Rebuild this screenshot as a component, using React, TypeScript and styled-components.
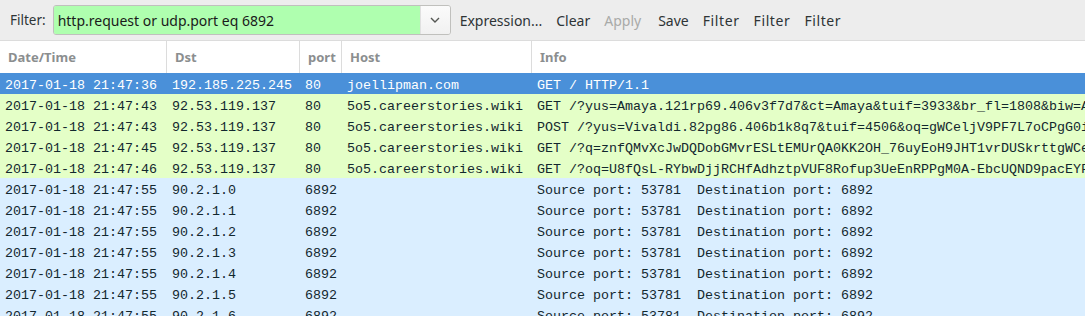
import styled, { createGlobalStyle } from "styled-components";

const GlobalStyle = createGlobalStyle`
  body {
    margin: 0;
    background: #ededed;
    font-family: "Noto Sans", "DejaVu Sans", sans-serif;
    overflow: hidden;
  }
`;

type Kind = "selected" | "http" | "udp";

interface Packet {
  time: string;
  dst: string;
  port: string;
  host: string;
  info: string;
  kind: Kind;
}

const udp = (n: number): Packet => ({
  time: "2017-01-18 21:47:55",
  dst: `90.2.1.${n}`,
  port: "6892",
  host: "",
  info: "Source port: 53781  Destination port: 6892",
  kind: "udp",
});

const packets: Packet[] = [
  {
    time: "2017-01-18 21:47:36",
    dst: "192.185.225.245",
    port: "80",
    host: "joellipman.com",
    info: "GET / HTTP/1.1",
    kind: "selected",
  },
  {
    time: "2017-01-18 21:47:43",
    dst: "92.53.119.137",
    port: "80",
    host: "5o5.careerstories.wiki",
    info: "GET /?yus=Amaya.121rp69.406v3f7d7&ct=Amaya&tuif=3933&br_fl=1808&biw=A",
    kind: "http",
  },
  {
    time: "2017-01-18 21:47:43",
    dst: "92.53.119.137",
    port: "80",
    host: "5o5.careerstories.wiki",
    info: "POST /?yus=Vivaldi.82pg86.406b1k8q7&tuif=4506&oq=gWCeljV9PF7L7oCPgG0i",
    kind: "http",
  },
  {
    time: "2017-01-18 21:47:45",
    dst: "92.53.119.137",
    port: "80",
    host: "5o5.careerstories.wiki",
    info: "GET /?q=znfQMvXcJwDQDobGMvrESLtEMUrQA0KK2OH_76uyEoH9JHT1vrDUSkrttgWCe",
    kind: "http",
  },
  {
    time: "2017-01-18 21:47:46",
    dst: "92.53.119.137",
    port: "80",
    host: "5o5.careerstories.wiki",
    info: "GET /?oq=U8fQsL-RYbwDjjRCHfAdhztpVUF8Rofup3UeEnRPPgM0A-EbcUQND9pacEYF",
    kind: "http",
  },
  udp(0),
  udp(1),
  udp(2),
  udp(3),
  udp(4),
  udp(5),
  udp(6),
];

const rowColors: Record<Kind, { bg: string; fg: string }> = {
  selected: { bg: "#4a90d9", fg: "#ffffff" },
  http: { bg: "#e4ffc7", fg: "#12272e" },
  udp: { bg: "#daeeff", fg: "#12272e" },
};

const columns = "167px 133px 42px 190px 1fr";

const Toolbar = styled.div`
  display: flex;
  align-items: center;
  height: 40px;
  padding-left: 10px;
  background: #ededed;
  border-bottom: 1px solid #dcdcdc;
  font-size: 13.5px;
  color: #2e3436;
`;

const FilterLabel = styled.span`
  margin-right: 7px;
`;

const FilterCombo = styled.div`
  display: flex;
  width: 398px;
  height: 30px;
  box-sizing: border-box;
  border: 1px solid #c0c0bd;
  border-radius: 3px;
  overflow: hidden;
  margin-right: 2px;
`;

const FilterInput = styled.div`
  flex: 1;
  background: #afffaf;
  display: flex;
  align-items: center;
  padding-left: 4px;
  font-size: 14px;
  color: #1a1a1a;
`;

const DropButton = styled.div`
  width: 29px;
  display: flex;
  align-items: center;
  justify-content: center;
  background: linear-gradient(#fbfbfb, #f1f1f1);
  border-left: 1px solid #e0e0e0;
`;

const ToolButton = styled.span<{ $disabled?: boolean; $wide?: boolean }>`
  padding: 0 7px;
  font-size: 14px;
  letter-spacing: ${({ $wide }) => ($wide ? "0.6px" : "0")};
  color: ${({ $disabled }) => ($disabled ? "#a9aaa8" : "#2e3436")};
  &:nth-of-type(5) {
    margin-left: 3px;
  }
`;

const Table = styled.div`
  background: #ffffff;
`;

const HeaderRow = styled.div`
  display: grid;
  grid-template-columns: ${columns};
  height: 32px;
  background: #ffffff;
`;

const HeaderCell = styled.div`
  display: flex;
  align-items: center;
  padding-left: 8px;
  border-right: 1px solid #dcdcdc;
  font-weight: bold;
  font-size: 13px;
  color: #8b8e8f;
  overflow: hidden;
  white-space: nowrap;
  &:last-child {
    border-right: none;
  }
`;

const Row = styled.div<{ $kind: Kind }>`
  display: grid;
  grid-template-columns: ${columns};
  height: 21px;
  box-sizing: border-box;
  padding-top: 3px;
  align-items: center;
  background: ${({ $kind }) => rowColors[$kind].bg};
  color: ${({ $kind }) => rowColors[$kind].fg};
  font-family: "Liberation Mono", "DejaVu Sans Mono", monospace;
  font-size: 13.33px;
`;

const Cell = styled.div`
  padding-left: 5px;
  white-space: pre;
  overflow: hidden;
`;

const Chevron = () => (
  <svg width="10" height="6" viewBox="0 0 10 6">
    <path d="M1 1 L5 5 L9 1" fill="none" stroke="#555753" strokeWidth="1.4" />
  </svg>
);

export default function App() {
  return (
    <>
      <GlobalStyle />
      <Toolbar>
        <FilterLabel>Filter:</FilterLabel>
        <FilterCombo>
          <FilterInput>http.request or udp.port eq 6892</FilterInput>
          <DropButton>
            <Chevron />
          </DropButton>
        </FilterCombo>
        <ToolButton>Expression...</ToolButton>
        <ToolButton>Clear</ToolButton>
        <ToolButton $disabled>Apply</ToolButton>
        <ToolButton>Save</ToolButton>
        <ToolButton $wide>Filter</ToolButton>
        <ToolButton $wide>Filter</ToolButton>
        <ToolButton $wide>Filter</ToolButton>
      </Toolbar>
      <Table>
        <HeaderRow>
          <HeaderCell>Date/Time</HeaderCell>
          <HeaderCell>Dst</HeaderCell>
          <HeaderCell>port</HeaderCell>
          <HeaderCell>Host</HeaderCell>
          <HeaderCell>Info</HeaderCell>
        </HeaderRow>
        {packets.map((p, i) => (
          <Row key={i} $kind={p.kind}>
            <Cell>{p.time}</Cell>
            <Cell>{p.dst}</Cell>
            <Cell>{p.port}</Cell>
            <Cell>{p.host}</Cell>
            <Cell>{p.info}</Cell>
          </Row>
        ))}
      </Table>
    </>
  );
}
